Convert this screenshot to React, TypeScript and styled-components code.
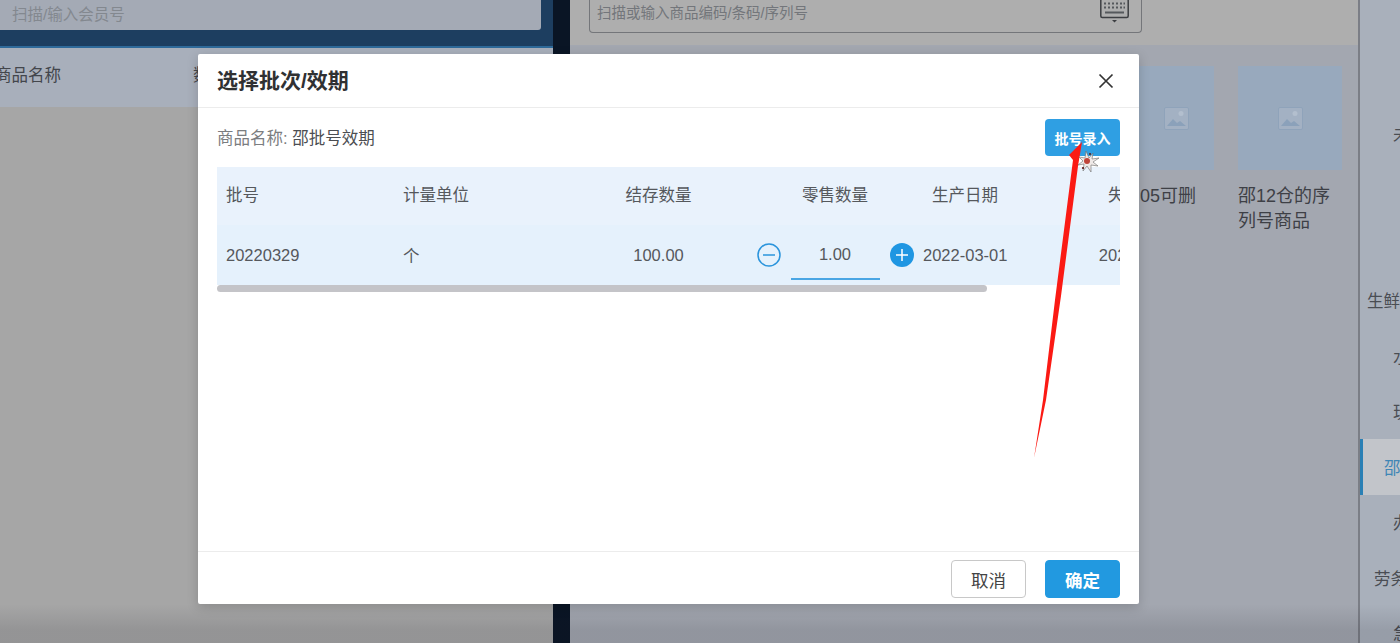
import React from 'react';
import styled, { createGlobalStyle } from 'styled-components';

const GlobalStyle = createGlobalStyle`
  html, body {
    margin: 0;
    padding: 0;
    background: #a6a6a6;
    font-family: "Liberation Sans", "Noto Sans CJK SC", sans-serif;
  }
  * { box-sizing: border-box; }
`;

const Page = styled.div`
  position: relative;
  display: flex;
  width: 1400px;
  height: 643px;
  overflow: hidden;
`;

/* dimmed page behind the dialog */
const LeftPanel = styled.div`
  width: 553px;
  flex-shrink: 0;
  display: flex;
  flex-direction: column;
  background: #a6a6a6;
`;

const MemberBand = styled.div`
  height: 48px;
  padding-right: 12px;
  background: #1d3e60;
  border-bottom: 2px solid #2f6a9a;
`;

const MemberInput = styled.div`
  height: 30px;
  padding: 0 0 5px 12px;
  display: flex;
  align-items: center;
  background: #a4aab5;
  border-radius: 0 0 3px 0;
  color: #83888f;
  font-size: 15.5px;
`;

const CartHead = styled.div`
  height: 59px;
  display: grid;
  grid-template-columns: 193px 1fr;
  align-items: center;
  background: #a8afbb;
  color: #43464c;
  font-size: 16.5px;
  padding-bottom: 7px;
`;

const CartHeadCell = styled.span<{ $flat?: boolean }>`
  text-indent: ${p => (p.$flat ? '0' : '-5px')};
`;

const Gutter = styled.div`
  width: 17px;
  flex-shrink: 0;
  background: #0a1525;
`;

const RightPanel = styled.div`
  flex: 1;
  display: flex;
  flex-direction: column;
  background: #a3a7b0;
`;

const SearchBar = styled.div`
  height: 45px;
  padding-left: 19px;
  flex-shrink: 0;
  background: #aeaeae;
`;

const SearchInput = styled.div`
  width: 553px;
  height: 33px;
  padding: 0 12px 10px 7px;
  display: flex;
  align-items: center;
  justify-content: space-between;
  border: 1px solid #74767a;
  border-top: none;
  border-radius: 0 0 4px 4px;
  color: #73767b;
  font-size: 14.5px;
`;

const KeyboardSvg = styled.svg`
  align-self: flex-start;
`;

const Products = styled.div`
  display: flex;
  gap: 24px;
  padding: 21px 0 0 568px;
`;

const Product = styled.div<{ $width: number }>`
  width: ${p => p.$width}px;
  flex-shrink: 0;
  color: #3e4046;
  font-size: 18px;
  line-height: 25px;
`;

const ProductImage = styled.div`
  height: 104px;
  margin-bottom: 14px;
  display: flex;
  align-items: center;
  justify-content: center;
  background: #98a9bd;
`;

const ProductName = styled.div<{ $indent?: number }>`
  padding-left: ${p => p.$indent ?? 0}px;
`;

const CategoryBar = styled.div`
  width: 42px;
  flex-shrink: 0;
  padding-top: 106px;
  background: #a9b0bb;
  border-left: 2px solid #7b7e86;
  overflow: hidden;
`;

const Category = styled.div<{ $indent: number; $active?: boolean }>`
  height: 55.5px;
  padding-left: ${p => p.$indent}px;
  display: flex;
  align-items: center;
  white-space: nowrap;
  font-size: 16.5px;
  color: ${p => (p.$active ? '#3f86b5' : '#4a4d53')};
  background: ${p => (p.$active ? '#c2c5ca' : 'transparent')};
  border-left: 3px solid ${p => (p.$active ? '#2a80b5' : 'transparent')};
`;

/* mask + dialog */
const Mask = styled.div`
  position: absolute;
  inset: 0;
  padding: 54px 0 0 198px;
  background: linear-gradient(to bottom, transparent 94%, rgba(20, 20, 30, 0.12) 98%);
`;

const Dialog = styled.div`
  width: 941px;
  height: 550px;
  display: flex;
  flex-direction: column;
  background: #fff;
  border-radius: 2px;
  box-shadow: 0 3px 12px rgba(0, 0, 0, 0.18);
`;

const DialogHeader = styled.div`
  height: 54px;
  flex-shrink: 0;
  padding: 0 25px 0 19px;
  display: flex;
  align-items: center;
  justify-content: space-between;
  border-bottom: 1px solid #ececec;
`;

const DialogTitle = styled.div`
  margin-top: -3px;
  font-size: 21px;
  font-weight: 700;
  color: #303133;
`;

const CloseButton = styled.button`
  width: 16px;
  height: 16px;
  margin-top: 1px;
  padding: 0;
  border: none;
  background: none;
  color: #333;
  line-height: 0;
`;

const DialogBody = styled.div`
  flex: 1;
  padding: 11px 19px 0;
  display: flex;
  flex-direction: column;
`;

const InfoRow = styled.div`
  height: 48px;
  flex-shrink: 0;
  display: flex;
  justify-content: space-between;
  align-items: flex-start;
`;

const InfoText = styled.div`
  margin-top: 6px;
  font-size: 16.5px;
  color: #7b7d80;
`;

const InfoValue = styled.span`
  color: #4c4e52;
`;

const EntryButton = styled.button`
  width: 75px;
  height: 37px;
  padding: 0;
  border: none;
  border-radius: 4px;
  background: #2f9fe3;
  color: #fff;
  font-family: inherit;
  font-size: 14px;
  font-weight: 700;
`;

const TableWrap = styled.div`
  width: 903px;
  overflow: hidden;
`;

const TableRow = styled.div<{ $height: number; $bg: string; $lift?: number }>`
  width: 1100px;
  height: ${p => p.$height}px;
  padding-bottom: ${p => p.$lift ?? 0}px;
  display: grid;
  grid-template-columns: 177px 176px 177px 176px 84px 310px;
  align-items: center;
  background: ${p => p.$bg};
  color: #55585c;
  font-size: 16.5px;
`;

const TableCell = styled.div<{ $center?: boolean }>`
  padding-left: ${p => (p.$center ? 0 : 9)}px;
  text-align: ${p => (p.$center ? 'center' : 'left')};
  white-space: nowrap;
`;

const ClippedCell = styled(TableCell)`
  padding-right: 42px;
`;

const Stepper = styled.div`
  display: flex;
  align-items: center;
  justify-content: center;
  gap: 10px;
`;

const StepIcon = styled.svg`
  width: 24px;
  height: 24px;
  flex-shrink: 0;
`;

const QtyInput = styled.div`
  width: 89px;
  height: 50px;
  padding-top: 1px;
  display: flex;
  align-items: center;
  justify-content: center;
  border-bottom: 2px solid #4aa6e4;
`;

const ScrollTrack = styled.div`
  height: 7px;
  width: 770px;
  border-radius: 4px;
  background: #c4c4c8;
`;

const DialogFooter = styled.div`
  height: 53px;
  flex-shrink: 0;
  padding: 8px 19px 0 0;
  display: flex;
  justify-content: flex-end;
  gap: 19px;
  border-top: 1px solid #ececec;
`;

const FooterButton = styled.button<{ $primary?: boolean }>`
  width: 75px;
  height: 38px;
  padding: 0;
  border-radius: 4px;
  border: 1px solid ${p => (p.$primary ? '#2299e0' : '#c8c8c8')};
  background: ${p => (p.$primary ? '#2299e0' : '#fff')};
  color: ${p => (p.$primary ? '#fff' : '#444')};
  font-family: inherit;
  font-size: 17.5px;
  font-weight: ${p => (p.$primary ? 700 : 400)};
`;

/* annotation drawn on top of the recording */
const Annotation = styled.svg`
  position: absolute;
  left: 0;
  top: 0;
  width: 1400px;
  height: 643px;
  pointer-events: none;
`;

const ImageIcon = () => (
  <svg width="25" height="23" viewBox="0 0 25 23" fill="none">
    <rect x="0.5" y="0.5" width="24" height="22" rx="1.5" fill="#a3b1c3" stroke="#8fa3ba" />
    <path d="M3 19l6-7 4 4 3-2 6 5z" fill="#8ba1ba" />
    <circle cx="17" cy="6.5" r="2.5" fill="#b3bfce" />
  </svg>
);

const KeyboardIcon = () => (
  <KeyboardSvg width="29" height="24" viewBox="0 0 29 24" fill="none">
    <rect x="0.8" y="-1" width="27.4" height="18.5" rx="1.5" stroke="#3c3e42" strokeWidth="1.5" />
    <path
      d="M4 3.5h2M8 3.5h2M12 3.5h2M16 3.5h2M20 3.5h2M23.5 3.5h1.5M4 7.5h2M8 7.5h2M12 7.5h2M16 7.5h2M20 7.5h2M23.5 7.5h1.5M5 12.5h19"
      stroke="#55585c"
      strokeWidth="2"
    />
    <path d="M12 20h5l-2.5 2.5z" fill="#3c3e42" />
  </KeyboardSvg>
);

const categories = [
  { label: '未', indent: 30 },
  { label: '', indent: 30 },
  { label: '', indent: 30 },
  { label: '生鲜', indent: 4 },
  { label: '水', indent: 30 },
  { label: '玩', indent: 30 },
  { label: '邵', indent: 21, active: true },
  { label: '办', indent: 30 },
  { label: '劳务', indent: 11 },
  { label: '急', indent: 30 },
];

export default function App() {
  return (
    <Page>
      <GlobalStyle />
      <LeftPanel>
        <MemberBand>
          <MemberInput>扫描/输入会员号</MemberInput>
        </MemberBand>
        <CartHead>
          <CartHeadCell>商品名称</CartHeadCell>
          <CartHeadCell $flat>数量</CartHeadCell>
        </CartHead>
      </LeftPanel>
      <Gutter />
      <RightPanel>
        <SearchBar>
          <SearchInput>
            扫描或输入商品编码/条码/序列号
            <KeyboardIcon />
          </SearchInput>
        </SearchBar>
        <Products>
          <Product $width={76}>
            <ProductImage>
              <ImageIcon />
            </ProductImage>
            <ProductName $indent={2}>05可删</ProductName>
          </Product>
          <Product $width={104}>
            <ProductImage>
              <ImageIcon />
            </ProductImage>
            <ProductName>邵12仓的序列号商品</ProductName>
          </Product>
        </Products>
      </RightPanel>
      <CategoryBar>
        {categories.map((c, i) => (
          <Category key={i} $indent={c.indent} $active={c.active}>
            {c.label}
          </Category>
        ))}
      </CategoryBar>

      <Mask>
        <Dialog>
          <DialogHeader>
            <DialogTitle>选择批次/效期</DialogTitle>
            <CloseButton aria-label="关闭">
              <svg width="16" height="16" viewBox="0 0 16 16" fill="none">
                <path d="M1.5 1.5l13 13M14.5 1.5l-13 13" stroke="currentColor" strokeWidth="1.7" />
              </svg>
            </CloseButton>
          </DialogHeader>
          <DialogBody>
            <InfoRow>
              <InfoText>
                商品名称: <InfoValue>邵批号效期</InfoValue>
              </InfoText>
              <EntryButton>批号录入</EntryButton>
            </InfoRow>
            <TableWrap>
              <TableRow $height={58} $bg="#e9f2fc" $lift={4}>
                <TableCell>批号</TableCell>
                <TableCell>计量单位</TableCell>
                <TableCell $center>结存数量</TableCell>
                <TableCell $center>零售数量</TableCell>
                <TableCell $center>生产日期</TableCell>
                <ClippedCell $center>失效日期</ClippedCell>
              </TableRow>
              <TableRow $height={60} $bg="#e5f1fc">
                <TableCell>20220329</TableCell>
                <TableCell>个</TableCell>
                <TableCell $center>100.00</TableCell>
                <Stepper>
                  <StepIcon viewBox="0 0 24 24" fill="none">
                    <circle cx="12" cy="12" r="11" stroke="#2a94dc" strokeWidth="1.5" />
                    <path d="M6 12h12" stroke="#2a94dc" strokeWidth="1.5" />
                  </StepIcon>
                  <QtyInput>1.00</QtyInput>
                  <StepIcon viewBox="0 0 24 24" fill="none">
                    <circle cx="12" cy="12" r="12" fill="#1f96e2" />
                    <path d="M6 12h12M12 6v12" stroke="#fff" strokeWidth="1.5" />
                  </StepIcon>
                </Stepper>
                <TableCell $center>2022-03-01</TableCell>
                <ClippedCell $center>2022-03-31</ClippedCell>
              </TableRow>
            </TableWrap>
            <ScrollTrack />
          </DialogBody>
          <DialogFooter>
            <FooterButton>取消</FooterButton>
            <FooterButton $primary>确定</FooterButton>
          </DialogFooter>
        </Dialog>
      </Mask>

      <Annotation viewBox="0 0 1400 643">
        <polygon
          points="1082,142 1078,166 1061,296 1046,400 1034,458 1043,400 1055,300 1073,160 1069,155"
          fill="#fb1a14"
        />
        <g transform="translate(1088 162)">
          <path
            d="M-2-11L1-4 5-9 4-3 11-4 5 0 10 4 3 3 3 10-1 4-5 9-4 2-10 3-5-1-9-5-3-4z"
            fill="#efe9e7"
            stroke="#6b6b6b"
            strokeWidth="0.6"
          />
          <circle cx="-1" cy="-1" r="3" fill="#c0453a" />
          <circle cx="-5" cy="6" r="1.1" fill="#5a1512" />
          <circle cx="2" cy="-8" r="1" fill="#5a1512" />
        </g>
      </Annotation>
    </Page>
  );
}
